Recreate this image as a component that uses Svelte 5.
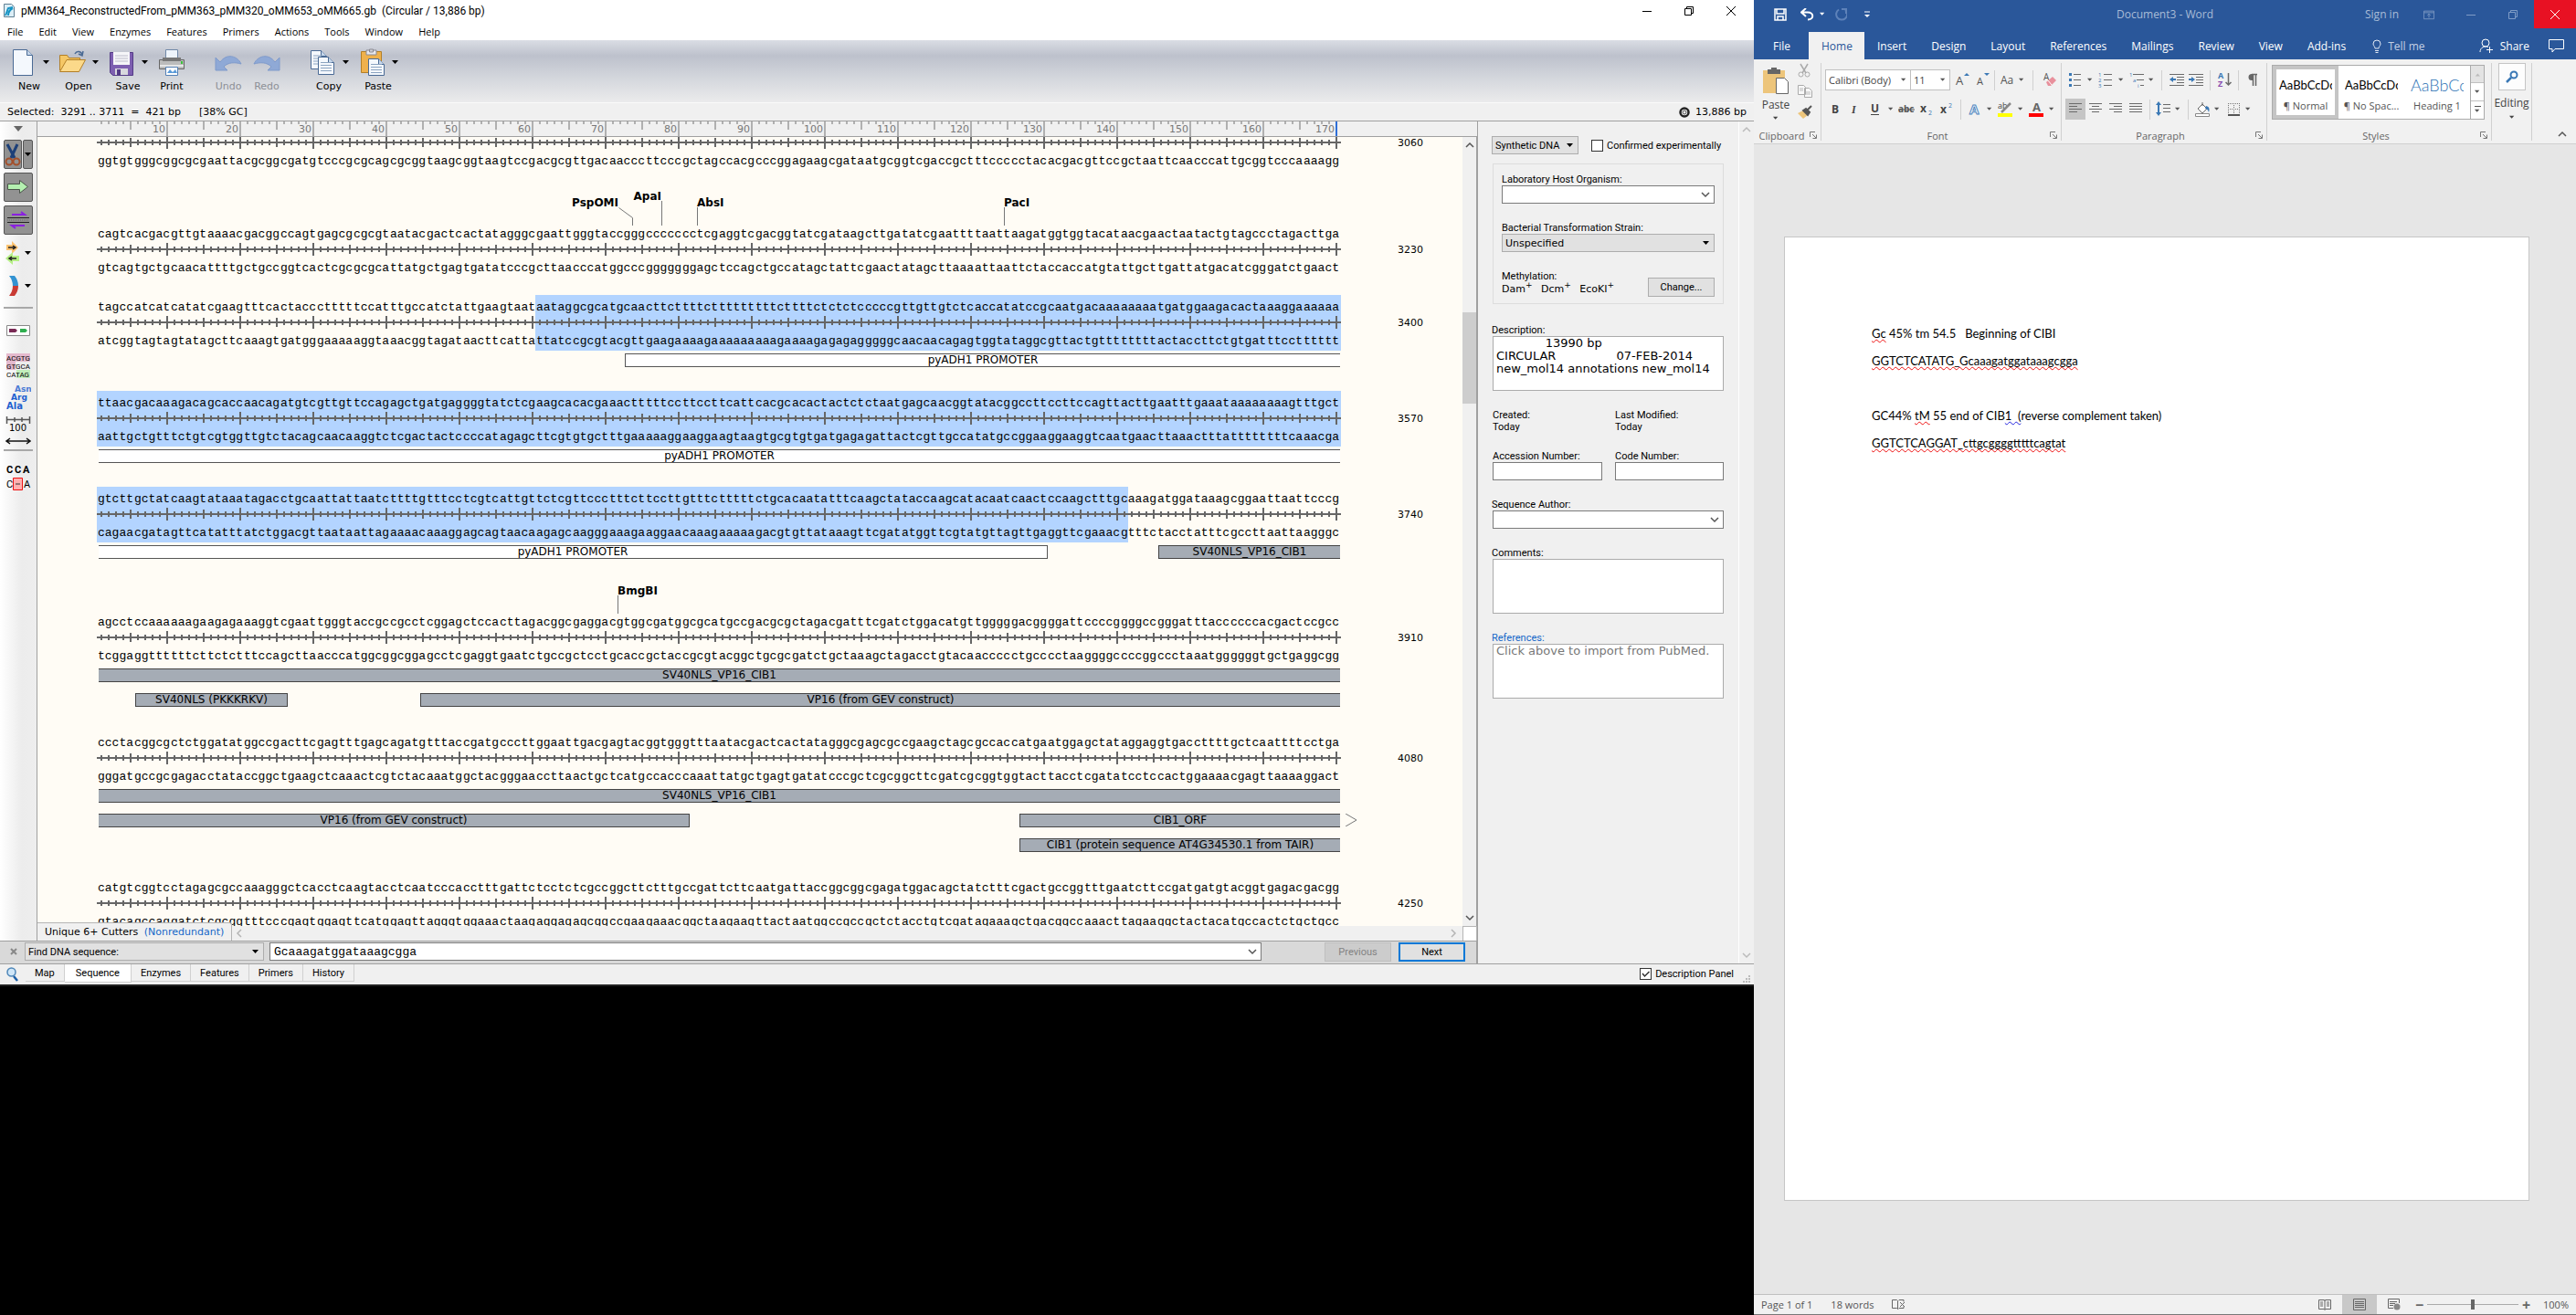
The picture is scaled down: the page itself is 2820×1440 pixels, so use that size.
<script>
  const ui = {
    menus: ['File', 'Edit', 'View', 'Enzymes', 'Features', 'Primers', 'Actions', 'Tools', 'Window', 'Help'],
    tabs: ['Map', 'Sequence', 'Enzymes', 'Features', 'Primers', 'History'],
    ribbonTabs: ['File', 'Home', 'Insert', 'Design', 'Layout', 'References', 'Mailings', 'Review', 'View', 'Add-ins'],
  };

  const description =
    ' '.repeat(13) + '13990 bp\nCIRCULAR' + ' '.repeat(16) + '07-FEB-2014\nnew_mol14 annotations new_mol14';

  const pair = { a: 't', t: 'a', g: 'c', c: 'g' };
  const complement = (s) => [...s].map((b) => pair[b]).join('');
  const fives = (s) => s.match(/.{5}/g);

  const rows = [
    {
      end: 3060,
      bottomOnly: true,
      bottom:
        'ggtgtgggcggcgcgaattacgcggcgatgtcccgcgcagcgcggtaagcggtaagtccgacgcgttgacaacccttccc' +
        'gctagccacgcccggagaagcgataatgcggtcgaccgctttccccctacacgacgttccgctaattcaacccattgcggtcccaaaagg',
    },
    {
      end: 3230,
      siteHeight: 37,
      sites: [
        { name: 'PspOMI', x: 571, y: 20, anchor: 'end', d: 'M571.5 21.5L586.5 32.5V41' },
        { name: 'ApaI', x: 618, y: 13, anchor: 'end', d: 'M618.5 14V41' },
        { name: 'AbsI', x: 657, y: 20, anchor: 'start', d: 'M657.5 21V41' },
        { name: 'PacI', x: 993, y: 20, anchor: 'start', d: 'M993.5 21V41' },
      ],
      top:
        'cagtcacgacgttgtaaaacgacggccagtgagcgcgcgtaatacgactcactatagggcgaattgggtaccgggccccc' +
        'cctcgaggtcgacggtatcgataagcttgatatcgaattttaattaagatggtggtacataacgaactaatactgtagccctagacttga',
    },
    {
      end: 3400,
      sel: [60, 170],
      lanes: [[{ from: 72, to: 170, name: 'pyADH1 PROMOTER', kind: 'plain openR' }]],
      top:
        'tagccatcatcatatcgaagtttcactaccctttttccatttgccatctattgaagtaataataggcgcatgcaacttct' +
        'tttctttttttttcttttctctctcccccgttgttgtctcaccatatccgcaatgacaaaaaaaatgatggaagacactaaaggaaaaaa',
    },
    {
      end: 3570,
      sel: [0, 170],
      lanes: [[{ from: 0, to: 170, name: 'pyADH1 PROMOTER', kind: 'plain openL openR' }]],
      top:
        'ttaacgacaaagacagcaccaacagatgtcgttgttccagagctgatgaggggtatctcgaagcacacgaaactttttcc' +
        'ttccttcattcacgcacactactctctaatgagcaacggtatacggccttccttccagttacttgaatttgaaataaaaaaaagtttgct',
    },
    {
      end: 3740,
      sel: [0, 141],
      lanes: [
        [
          { from: 0, to: 130, name: 'pyADH1 PROMOTER', kind: 'plain openL' },
          { from: 145, to: 170, name: 'SV40NLS_VP16_CIB1', kind: 'openR' },
        ],
      ],
      top:
        'gtcttgctatcaagtataaatagacctgcaattattaatcttttgtttcctcgtcattgttctcgttccctttcttcctt' +
        'gtttctttttctgcacaatatttcaagctataccaagcatacaatcaactccaagctttgcaaagatggataaagcggaattaattcccg',
    },
    {
      end: 3910,
      siteHeight: 30,
      sites: [{ name: 'BmgBI', x: 570, y: 13, anchor: 'start', d: 'M570.5 14V34' }],
      lanes: [
        [{ from: 0, to: 170, name: 'SV40NLS_VP16_CIB1', kind: 'openL openR' }],
        [
          { from: 5, to: 26, name: 'SV40NLS (PKKKRKV)', kind: '' },
          { from: 44, to: 170, name: 'VP16 (from GEV construct)', kind: 'openR' },
        ],
      ],
      top:
        'agcctccaaaaaagaagagaaaggtcgaattgggtaccgccgcctcggagctccacttagacggcgaggacgtggcgatg' +
        'gcgcatgccgacgcgctagacgatttcgatctggacatgttgggggacggggattccccggggccgggatttaccccccacgactccgcc',
    },
    {
      end: 4080,
      lanes: [
        [{ from: 0, to: 170, name: 'SV40NLS_VP16_CIB1', kind: 'openL openR' }],
        [
          { from: 0, to: 81, name: 'VP16 (from GEV construct)', kind: 'openL' },
          { from: 126, to: 170, name: 'CIB1_ORF', kind: 'openR', more: true },
        ],
        [{ from: 126, to: 170, name: 'CIB1 (protein sequence AT4G34530.1 from TAIR)', kind: 'openR' }],
      ],
      top:
        'ccctacggcgctctggatatggccgacttcgagtttgagcagatgtttaccgatgcccttggaattgacgagtacggtgg' +
        'gtttaatacgactcactatagggcgagcgccgaagctagcgccaccatgaatggagctataggaggtgaccttttgctcaattttcctga',
    },
    {
      end: 4250,
      top:
        'catgtcggtcctagagcgccaaagggctcacctcaagtacctcaatcccacctttgattctcctctcgccggcttctttg' +
        'ccgattcttcaatgattaccggcggcgagatggacagctatctttcgactgccggtttgaatcttccgatgatgtacggtgagacgacgg',
    },
  ];

  const indexes = Array.from({ length: 170 }, (_, i) => i + 1);
  const axisPath =
    'M0 7H1362' +
    indexes
      .map((i) => {
        const h = i % 10 === 0 ? 7 : i % 5 === 0 ? 5 : 3;
        return `M${i * 8 - 3} ${7 - h}v${h * 2}`;
      })
      .join('');
  const rulerPath = indexes.map((i) => `M${i * 8 - 3} 0v${i % 10 === 0 ? 16 : i % 5 === 0 ? 9 : 3}`).join('');
  const tens = Array.from({ length: 17 }, (_, i) => (i + 1) * 10);

  const page = (x, y, w, h) =>
    `<path d="M${x} ${y}h${w - 6}l6 6v${h - 6}h-${w}z" fill="#f4f8fd" stroke="#4a6a94"/><path d="M${x + w - 6} ${y}v6h6" fill="#c5d6ea" stroke="#4a6a94"/>`;
  const textLines = (x, y, w, n) =>
    `<path d="${Array.from({ length: n }, (_, k) => `M${x} ${y + k * 3}h${w}`).join('')}" stroke="#8ba3c0"/>`;

  const tools = [
    { name: 'New', drop: true, art: page(4.5, 1.5, 21, 28) },
    {
      name: 'Open', drop: true,
      art: '<path d="M1.500 24V7.500h8l2 3h12v4" fill="#f5c766" stroke="#b27f27"/><path d="M1.500 25.500L9 12.500h20.500l-7 13z" fill="#fbd98a" stroke="#b27f27"/><path d="M18 6c2-4 7-3 8 1m-4-1l4 2 1-5" fill="none" stroke="#4a6a94" stroke-width="1.500"/>',
    },
    {
      name: 'Save', drop: true,
      art: '<path d="M2.500 4.500h25v25h-22l-3-3z" fill="#7d5fb0" stroke="#533a86"/><path d="M6 4h18v14H6z" fill="#f5f5f8"/><path d="M8 8h14M8 11h14M8 14h14" stroke="#bcbcca"/><path d="M8 22h14v7H8z" fill="#d8d8de"/><path d="M10 23h4v6h-4z" fill="#533a86"/>',
    },
    {
      name: 'Print',
      art: '<path d="M8.500 1.500h13v12h-13z" fill="#eef4fb" stroke="#7189a8"/><path d="M1.500 12.500h27v10h-27z" fill="#bcbcbc" stroke="#666"/><path d="M5 10h20v4H5z" fill="#777"/><path d="M2 18h26v2H2z" fill="#e6e6e6"/><path d="M8.500 20.500h13v9h-13z" fill="#fff" stroke="#5580b5"/><path d="M10 27l3-4 3 3 3-3 2 4z" fill="#5a9ad8"/><path d="M25 14h2v3h-2z" fill="#3cc13c"/>',
    },
    { name: 'Undo', off: true, gap: true, art: '<path d="M1 10v14h13l-4-4c5-5 12-5 19-3-4-9-16-12-23-2z" fill="#8fa9d6" stroke="#7f9acb"/>' },
    { name: 'Redo', off: true, art: '<path d="M29 10v14H16l4-4c-5-5-12-5-19-3 4-9 16-12 23-2z" fill="#8fa9d6" stroke="#7f9acb"/>' },
    { name: 'Copy', drop: true, gap: true, art: page(2.5, 2.5, 17, 20) + textLines(5, 8, 9, 4) + page(10.5, 9.5, 17, 19) + textLines(13, 15.5, 12, 4) },
    {
      name: 'Paste', drop: true,
      art: '<path d="M3.500 3.500h22v23h-22z" fill="#efb14c" stroke="#b27f27"/><path d="M9 2h11v5H9z" fill="#e8e8ee" stroke="#8a8a92"/><path d="M12.500 1h4v3h-4z" fill="#d0d0d8" stroke="#8a8a92"/>' + page(11.5, 11.5, 17, 18) + textLines(14, 17.5, 12, 4),
    },
  ];

  const g = 'fill="none" stroke="#6a6a6a"';
  const lines = (d) => `<path d="${d}" ${g}/>`;
  const icons = {
    grow: '<text x="1" y="14" font-size="13" fill="#555">A</text><path d="M10 4l3-3 3 3z" fill="#3a78b5"/>',
    shrink: '<text x="2" y="14" font-size="11" fill="#555">A</text><path d="M10 1l3 3 3-3z" fill="#3a78b5"/>',
    caps: '<text x="0" y="13" font-size="12" fill="#555">Aa</text>',
    eraser: '<text x="1" y="9" font-size="10" fill="#555">A</text><path d="M4 11l7-6 4 4-6 6H6z" fill="#e8909c"/><path d="M6 9l4 5" stroke="#fff"/>',
    bold: '<text x="4" y="13" font-size="12" font-weight="700" fill="#444">B</text>',
    italic: '<text x="5" y="13" font-size="12" font-style="italic" font-weight="700" font-family="Liberation Serif" fill="#444">I</text>',
    under: '<text x="4" y="12" font-size="12" font-weight="700" fill="#444">U</text><path d="M4 14.500h9" stroke="#444"/>',
    strike: '<text x="-1" y="12" font-size="10" font-weight="700" fill="#555">abc</text><path d="M-1 9h18" stroke="#555"/>',
    sub: '<text x="1" y="12" font-size="12" font-weight="700" fill="#444">x</text><text x="10" y="15" font-size="7" fill="#3a78b5">2</text>',
    sup: '<text x="1" y="13" font-size="12" font-weight="700" fill="#444">x</text><text x="10" y="7" font-size="7" fill="#3a78b5">2</text>',
    glow: '<text x="3" y="14" font-size="15" font-weight="700" fill="#fff" stroke="#4d86c0">A</text>',
    mark: '<text x="0" y="8" font-size="9" fill="#444">ab</text><path d="M14 2L6 10l-2 2" stroke="#888" stroke-width="2.500"/><path d="M0 13h16v4H0z" fill="#ff0"/>',
    color: '<text x="4" y="11" font-size="13" font-weight="700" fill="#666">A</text><path d="M0 13h16v4H0z" fill="#f00"/>',
    bullets: lines('M6 2.500h8M6 8.500h8M6 14.500h8') + '<path d="M1 1h3v3H1zM1 7h3v3H1zM1 13h3v3H1z" fill="#3a78b5"/>',
    numbers: lines('M6 2.500h9M6 8.500h9M6 14.500h9') + '<text x="0" y="5" font-size="6" fill="#3a78b5">1</text><text x="0" y="11" font-size="6" fill="#3a78b5">2</text><text x="0" y="17" font-size="6" fill="#3a78b5">3</text>',
    levels: lines('M4 2.500h12M8 8.500h8M12 14.500h4') + '<text x="0" y="5" font-size="6" fill="#3a78b5">1</text><text x="4" y="11" font-size="6" fill="#3a78b5">a</text><text x="9" y="17" font-size="6" fill="#3a78b5">i</text>',
    outdent: lines('M0 2.500h16M8 5.500h8M8 8.500h8M8 11.500h8M0 14.500h16') + '<path d="M0 8l4-3v2h3v2H4v2z" fill="#3a78b5"/>',
    indent: lines('M0 2.500h16M8 5.500h8M8 8.500h8M8 11.500h8M0 14.500h16') + '<path d="M7 8L3 5v2H0v2h3v2z" fill="#3a78b5"/>',
    sort: '<text x="1" y="7" font-size="9" font-weight="700" fill="#3a78b5">A</text><text x="1" y="16" font-size="9" font-weight="700" fill="#8a4fb0">Z</text><path d="M12.500 1v13M9.500 11l3 3 3-3" fill="none" stroke="#6a6a6a" stroke-width="1.500"/>',
    pilcrow: '<path d="M13 2.500H7M8.500 3v12M11.500 3v12" fill="none" stroke="#666" stroke-width="1.500"/><path d="M7 2h2v7H7a3.500 3.500 0 0 1 0-7z" fill="#666"/>',
    left: lines('M1 2.500h14M1 5.500h9M1 8.500h14M1 11.500h9'),
    center: lines('M1 2.500h14M4 5.500h8M1 8.500h14M4 11.500h8'),
    right: lines('M1 2.500h14M6 5.500h9M1 8.500h14M6 11.500h9'),
    justify: lines('M1 2.500h14M1 5.500h14M1 8.500h14M1 11.500h14'),
    spacing: lines('M8 3.500h8M8 7.500h8M8 11.500h8') + '<path d="M3 0l3 4H4v8h2l-3 4-3-4h2V4H0z" fill="#3a78b5"/>',
    bucket: '<path d="M3 8l5-5 5 5-5 5z" fill="#fff" stroke="#6a6a6a"/><path d="M8 5V1" stroke="#6a6a6a"/><path d="M12 5c4 1 4 4 3 7-1-3-2-4-4-4z" fill="#3a78b5"/><path d="M.500 13.500h15v3H.500z" fill="#fff" stroke="#888"/>',
    borders: '<path d="M2.500 2v13M8.500 2v13M14.500 2v13M2 2.500h13M2 8.500h13" stroke="#777" stroke-dasharray="1 1"/><path d="M2 15h13" stroke="#555" stroke-width="2"/>',
  };

  const fontTop = [['grow', 25], ['shrink', 20], ['|', 6], ['caps', 23], ['v', 8], ['|', 16], ['eraser', 22]];
  const fontBottom = [['bold', 22], ['italic', 20], ['under', 24], ['v', 11], ['strike', 24], ['sub', 20], ['sup', 24], ['|', 6], ['glow', 24], ['v', 9], ['mark', 25], ['v', 9], ['color', 25], ['v', 10]];
  const paraTop = [['bullets', 22], ['v', 10], ['numbers', 24], ['v', 10], ['levels', 24], ['v', 8], ['|', 14], ['outdent', 20], ['indent', 22], ['|', 8], ['sort', 24], ['|', 6], ['pilcrow', 26]];
  const paraBottom = [['left', 22], ['center', 22], ['right', 22], ['justify', 22], ['|', 8], ['spacing', 22], ['v', 10], ['|', 12], ['bucket', 20], ['v', 12], ['borders', 23], ['v', 10]];
</script>

{#snippet caret()}
  <svg class="caret" viewBox="0 0 8 5" aria-hidden="true"><path d="M0 0h7L3.500 4z" fill="currentColor" /></svg>
{/snippet}

{#snippet chevron(dir)}
  <svg class="chev {dir}" viewBox="0 0 10 10" aria-hidden="true"><path d="M1 3l4 4 4-4" fill="none" stroke="currentColor" stroke-width="1.500" /></svg>
{/snippet}

{#snippet strip(items)}
  {#each items as [name, w]}
    {#if name === '|'}
      <span class="vsep" style="width:{w}px"></span>
    {:else}
      <button class="rib" class:on={name === 'left'} style="width:{w}px" aria-label={name === 'v' ? 'More options' : name}>
        {#if name === 'v'}{@render caret()}{:else}<svg viewBox="0 0 16 17" width="16" height="17">{@html icons[name]}</svg>{/if}
      </button>
    {/if}
  {/each}
{/snippet}

{#snippet groupName(text)}
  <div class="gname">
    <span>{text}</span>
    <svg viewBox="0 0 8 8" width="8" height="8"><path d="M.500 6V.500H6M3 3l4 4M7.500 3.500v4h-4" fill="none" stroke="#777" /></svg>
  </div>
{/snippet}

{#snippet strand(bases)}
  <div class="strand">{#each fives(bases) as five}<span>{five}</span>{/each}</div>
{/snippet}

<div class="desktop">
  <section class="gene">
    <header class="title">
      <svg viewBox="0 0 14 17" width="14" height="17">
        <path d="M1.500 1.500h8l3 3v11h-11z" fill="#dceef6" stroke="#5f7f92" />
        <path d="M3 14L6 6l5-1M6 14c0-4 1-6 5-8" fill="none" stroke="#1593c4" stroke-width="2" />
      </svg>
      <h1>pMM364_ReconstructedFrom_pMM363_pMM320_oMM653_oMM665.gb&nbsp; (Circular / 13,886 bp)</h1>
      <div class="winbtns">
        <button aria-label="Minimize"><svg viewBox="0 0 12 12"><path d="M1 6.500h10" /></svg></button>
        <button aria-label="Restore"><svg viewBox="0 0 12 12"><path d="M1.500 3.500h7v7h-7zM3.500 3V1.500h7v7H9" /></svg></button>
        <button aria-label="Close"><svg viewBox="0 0 12 12"><path d="M1 1l10 10M11 1L1 11" /></svg></button>
      </div>
    </header>

    <nav class="menu">
      {#each ui.menus as m}<button>{m}</button>{/each}
    </nav>

    <div class="toolbar">
      {#each tools as t}
        <button class="tool" class:wide={t.drop} class:gap={t.gap} disabled={t.off}>
          <span class="art">
            <svg viewBox="0 0 30 30" width="30" height="30">{@html t.art}</svg>
            {#if t.drop}{@render caret()}{/if}
          </span>
          <span>{t.name}</span>
        </button>
      {/each}
    </div>

    <div class="info">
      <span class="sel">Selected:&nbsp; 3291 .. 3711&nbsp; =&nbsp; 421 bp</span>
      <span>[38% GC]</span>
      <span class="size">
        <svg viewBox="0 0 12 12" width="12" height="12"><circle cx="6" cy="6" r="4.500" fill="none" stroke="#222" stroke-width="2.500" /><circle cx="6" cy="6" r="2" fill="#eee" stroke="#555" /></svg>
        13,886 bp
      </span>
    </div>

    <div class="work">
      <aside class="side">
        <button class="head" aria-label="Tools menu"><svg viewBox="0 0 10 6" width="10" height="6"><path d="M0 0h10L5 6z" fill="#666" /></svg></button>
        <div class="duo">
          <button class="pressed" aria-label="Show enzymes">
            <svg viewBox="0 0 18 30" width="18" height="30">
              <path d="M3 4l8 15M14 4L7 19" stroke="#1c3f78" stroke-width="3" />
              <circle cx="5" cy="23" r="3.500" fill="none" stroke="#a3502c" stroke-width="2" />
              <circle cx="13" cy="23" r="3.500" fill="none" stroke="#a3502c" stroke-width="2" />
            </svg>
          </button>
          <button class="pressed" aria-label="Enzyme options">{@render caret()}</button>
        </div>
        <button class="pressed" aria-label="Show features"><svg viewBox="0 0 26 18" width="26" height="18"><path d="M1.500 5.500h13v-4l9 7-9 7v-4h-13z" fill="#b4f0b0" stroke="#4a544a" /></svg></button>
        <button class="pressed" aria-label="Show primers">
          <svg viewBox="0 0 26 22" width="26" height="22">
            <path d="M6 5h14l-4-3M20 17H6l4 3" fill="none" stroke="#8a1fe0" stroke-width="2" />
            <path d="M1 8.500h24M1 13.500h24" stroke="#222" /><path d="M1 11h24" stroke="#666" stroke-dasharray="1 1" />
          </svg>
        </button>
        <div class="duo flat">
          <button aria-label="Show ORFs">
            <svg viewBox="0 0 18 26" width="18" height="26">
              <path d="M2 4h6V0l7 7-7 7v-4H2z" fill="#fcc271" /><path d="M4 7h8M9 5l3 2-3 2" fill="none" stroke="#222" stroke-width="1.500" />
              <path d="M16 16h-7v-4l-8 7 8 7v-4h7z" fill="#b6ef86" /><path d="M13 19H5M8 17l-3 2 3 2" fill="none" stroke="#222" stroke-width="1.500" />
            </svg>
          </button>
          <button aria-label="ORF options">{@render caret()}</button>
        </div>
        <div class="duo flat">
          <button aria-label="Show translation">
            <svg viewBox="0 0 18 24" width="18" height="24"><path d="M5 1h6q4 5 4 11h-6q0-6-4-11z" fill="#3393d2" /><path d="M15 12h-6q0 6-4 11h6q4-5 4-11z" fill="#c93b34" /></svg>
          </button>
          <button aria-label="Translation options">{@render caret()}</button>
        </div>
        <hr />
        <button class="h34" aria-label="Alignment"><svg viewBox="0 0 26 12" width="26" height="12"><path d="M.500.500h25v11H.500z" fill="#fff" stroke="#888" /><path d="M3 4h7l2 2-2 2H3z" fill="#7a2a55" /><path d="M15 4h6l2 2-2 2h-6z" fill="#2fae4f" /></svg></button>
        <button class="h34" aria-label="Sequence colors">
          <svg viewBox="0 0 28 28" width="28" height="28">
            <path d="M1 1h26v9H1zM1 10h10v9H1z" fill="#e4b9cd" /><path d="M12 19h15v9H12z" fill="#c2efbb" />
            <text x="1" y="9" font-size="8">ACGTG</text><text x="1" y="18" font-size="8">GTGCA</text><text x="1" y="27" font-size="8">CATAG</text>
          </svg>
        </button>
        <button class="h28" aria-label="Amino acids">
          <svg viewBox="0 0 28 28" width="28" height="28" font-weight="700" fill="#1f5fd0">
            <text x="10" y="8" font-size="9" opacity=".8">Asn</text><text x="6" y="17" font-size="9">Arg</text><text x="1" y="27" font-size="10">Ala</text>
          </svg>
        </button>
        <button class="h22" aria-label="Numbering"><svg viewBox="0 0 28 18" width="28" height="18"><path d="M1 4.500h26M1.500 1v8M26.500 1v8M10 2v5M18 2v5" stroke="#555" stroke-width="1.500" /><text x="4" y="17" font-size="10">100</text></svg></button>
        <button class="h6" aria-label="Expand"><svg viewBox="0 0 28 8" width="28" height="8"><path d="M2 4h24M5 1L1 4l4 3M23 1l4 3-4 3" fill="none" stroke="#111" stroke-width="1.500" /></svg></button>
        <hr class="last" />
        <button class="h34" aria-label="Alignment mismatches">
          <svg viewBox="0 0 28 32" width="28" height="32">
            <g font-size="11" font-weight="700"><text x="1" y="11">C</text><text x="10" y="11">C</text><text x="19" y="11">A</text></g>
            <path d="M8.500 16.500h10v13h-10z" fill="#ffb0b0" stroke="#e11" /><path d="M11 23h5" stroke="#333" />
            <text x="1" y="27" font-size="11">C</text><text x="20" y="27" font-size="11">A</text>
          </svg>
        </button>
      </aside>

      <div class="center">
        <div class="ruler">
          <svg viewBox="0 0 1362 16" width="1362" height="16"><path d={rulerPath} stroke="#b0b0b0" stroke-width="2" /><path d="M1357 0v16" stroke="#2e6fd8" stroke-width="2" /></svg>
          <div class="tens">{#each tens as n}<span>{n}</span>{/each}</div>
        </div>
        <div class="scroller">
          <div class="canvas">
            {#each rows as row}
              <div class="row">
                {#if row.sites}
                  <svg class="sites" viewBox="0 0 1362 {row.siteHeight}" width="1362" height={row.siteHeight}>
                    {#each row.sites as s}
                      <path d={s.d} fill="none" stroke="#777" />
                      <text x={s.x} y={s.y} text-anchor={s.anchor}>{s.name}</text>
                    {/each}
                  </svg>
                {/if}
                <div class="duplex" class:half={row.bottomOnly}>
                  {#if row.sel}
                    <div class="hl" style="margin-left:{row.sel[0] * 8}px;width:{(row.sel[1] - row.sel[0]) * 8 + (row.sel[1] === 170 ? 2 : 1)}px"></div>
                  {/if}
                  <div class="strands">
                    {#if !row.bottomOnly}{@render strand(row.top)}{/if}
                    <svg viewBox="0 0 1362 14" width="1362" height="14"><path d={axisPath} stroke="#666" stroke-width="2" /></svg>
                    {@render strand(row.bottom ?? complement(row.top))}
                  </div>
                  <span class="pos">{row.end}</span>
                </div>
                {#if row.lanes}
                  <div class="lanes">
                    {#each row.lanes as lane}
                      <div class="lane">
                        {#each lane as f}
                          <div class="feat {f.kind}" style="grid-column:{f.from + 1} / {f.to + 1}">{f.name}</div>
                          {#if f.more}<svg class="more" viewBox="0 0 14 14" width="14" height="14"><path d="M1 0l12 7-12 7" fill="none" stroke="#777" /></svg>{/if}
                        {/each}
                      </div>
                    {/each}
                  </div>
                {/if}
              </div>
            {/each}
          </div>
          <div class="vbar">{@render chevron('up')}<i class="before"></i><i class="thumb"></i><i class="after"></i>{@render chevron('down')}</div>
        </div>
        <div class="under">
          <div class="cutters">Unique 6+ Cutters <a href="#nonredundant">(Nonredundant)</a></div>
          <div class="hbar">{@render chevron('left')}{@render chevron('right')}</div>
          <div class="corner"></div>
        </div>
        <form class="find">
          <button type="button" class="x" aria-label="Close find bar"><svg viewBox="0 0 8 8" width="8" height="8"><path d="M1 1l6 6M7 1L1 7" stroke="#888" stroke-width="2" /></svg></button>
          <label class="combo kind"><select aria-label="Find mode"><option>Find DNA sequence:</option></select>{@render caret()}</label>
          <label class="combo query"><input aria-label="Find text" value="Gcaaagatggataaagcgga" />{@render chevron('down')}</label>
          <button type="button" class="prev" disabled>Previous</button>
          <button type="button" class="next">Next</button>
        </form>
      </div>

      <aside class="panel">
        <div class="fields">
          <div class="first">
            <label class="combo kind"><select aria-label="DNA kind"><option>Synthetic DNA</option></select>{@render caret()}</label>
            <label class="check"><input type="checkbox" />Confirmed experimentally</label>
          </div>
          <div class="box">
            <label for="host">Laboratory Host Organism:</label>
            <div class="combo white"><input id="host" />{@render chevron('down')}</div>
            <label class="mt" for="strain">Bacterial Transformation Strain:</label>
            <div class="combo kind big"><select id="strain"><option>Unspecified</option></select>{@render caret()}</div>
            <div class="meth">
              <div><p>Methylation:</p><p class="marks">Dam<sup>+</sup> <span>Dcm<sup>+</sup></span> <span>EcoKI<sup>+</sup></span></p></div>
              <button>Change...</button>
            </div>
          </div>
          <label class="desc" for="desc">Description:</label>
          <textarea id="desc" value={description}></textarea>
          <div class="cols dates"><p>Created:<br />Today</p><p>Last Modified:<br />Today</p></div>
          <div class="cols">
            <div><label for="acc">Accession Number:</label><input id="acc" /></div>
            <div><label for="code">Code Number:</label><input id="code" /></div>
          </div>
          <label class="mt" for="author">Sequence Author:</label>
          <div class="combo white"><input id="author" />{@render chevron('down')}</div>
          <label class="mt" for="comments">Comments:</label>
          <textarea id="comments"></textarea>
          <label class="mt link" for="refs">References:</label>
          <textarea id="refs" placeholder="Click above to import from PubMed."></textarea>
        </div>
        <div class="vbar dim">{@render chevron('up')}{@render chevron('down')}</div>
      </aside>
    </div>

    <footer class="views">
      <button class="mag" aria-label="Search"><svg viewBox="0 0 16 16" width="16" height="16"><path d="M9 10l4 5" stroke="#1b5fa8" stroke-width="2.500" /><circle cx="6.500" cy="5.500" r="4.500" fill="#cfe6f8" stroke="#4d86b8" stroke-width="1.500" /></svg></button>
      {#each ui.tabs as t}<button class="view" class:active={t === 'Sequence'}>{t}</button>{/each}
      <label class="check"><span class="tick"><input type="checkbox" checked /><svg viewBox="0 0 13 13" width="13" height="13"><path d="M3 6l2.500 3L10.500 4" fill="none" stroke="#333" stroke-width="1.500" /></svg></span>Description Panel</label>
      <svg class="grip" viewBox="0 0 9 9" width="9" height="9"><path d="M6 0h2v2H6zM3 3h2v2H3zM6 3h2v2H6zM0 6h2v2H0zM3 6h2v2H3zM6 6h2v2H6z" fill="#bbb" /></svg>
    </footer>
  </section>

  <section class="word">
    <header class="wtitle">
      <div class="quick">
        <button aria-label="Save"><svg viewBox="0 0 14 14" width="14" height="14"><path d="M1 1h12v12H1zM3 1v5h8V1M4 13V9h6v4" fill="none" stroke="#fff" stroke-width="1.500" /></svg></button>
        <button aria-label="Undo"><svg viewBox="0 0 15 14" width="15" height="14"><path d="M6 0L1 4.500 6 9M1 4.500h7c7 0 7 8 0 8" fill="none" stroke="#fff" stroke-width="2" /></svg></button>
        {@render caret()}
        <button class="redo" aria-label="Redo"><svg viewBox="0 0 14 14" width="14" height="14"><path d="M8 1h5v5M12 2a6 6 0 1 1-7-.500" fill="none" stroke="#5e82b9" stroke-width="2" /></svg></button>
        <button class="custom" aria-label="Customize toolbar"><svg viewBox="0 0 6 8" width="6" height="8"><path d="M0 1h6" stroke="#fff" /><path d="M0 4h6L3 7z" fill="#fff" /></svg></button>
      </div>
      <h2>Document3 - Word</h2>
      <div class="wright">
        <span>Sign in</span>
        <button aria-label="Ribbon display options"><svg viewBox="0 0 14 12"><path d="M.500 1.500h13v10H.500zM.500 3.500h13M7 10V5M5 7l2-2 2 2" /></svg></button>
        <button aria-label="Minimize"><svg viewBox="0 0 12 12"><path d="M1 6.500h10" /></svg></button>
        <button aria-label="Restore"><svg viewBox="0 0 12 12"><path d="M1.500 3.500h7v7h-7zM3.500 3V1.500h7v7H9" /></svg></button>
        <button class="close" aria-label="Close"><svg viewBox="0 0 12 12"><path d="M1 1l10 10M11 1L1 11" /></svg></button>
      </div>
    </header>
    <nav class="wtabs">
      {#each ui.ribbonTabs as t}<button class:home={t === 'Home'}>{t}</button>{/each}
      <button class="tell"><svg viewBox="0 0 10 15" width="10" height="15"><path d="M3 10c0-2-2-3-2-5a4 4 0 0 1 8 0c0 2-2 3-2 5zM3 12.500h4M3.500 14.500h3" fill="none" stroke="#e3eaf5" /></svg>Tell me</button>
      <button class="share"><svg viewBox="0 0 16 16" width="16" height="16"><circle cx="7" cy="5" r="4" fill="none" stroke="#fff" /><path d="M1 15c0-4 3-6 6-6 1 0 2 0 3 1M8 12.500h7M11.500 9v7" fill="none" stroke="#fff" /></svg>Share</button>
      <button class="comment" aria-label="Comments"><svg viewBox="0 0 17 15" width="17" height="15"><path d="M.500.500h16v10H7l-3 3.500v-3.500H.500z" fill="none" stroke="#fff" /></svg></button>
    </nav>

    <div class="ribbon">
      <div class="group clip">
        <div class="gbody">
          <button class="paste">
            <svg viewBox="0 0 30 32" width="30" height="32"><path d="M1 4h24v25H1z" fill="#edc57b" /><path d="M6 3h4V1h6v2h4v5H6z" fill="#666" /><path d="M15.500 12.500h9l4 4v13h-13z" fill="#fff" stroke="#666" /></svg>
            <span>Paste</span>{@render caret()}
          </button>
          <div class="mini">
            <button aria-label="Cut"><svg viewBox="0 0 14 16" width="14" height="16"><path d="M3 1l6 10M11 1L5 11" stroke="#aaa" stroke-width="1.500" /><circle cx="3.500" cy="12.500" r="2.500" fill="none" stroke="#aaa" /><circle cx="10.500" cy="12.500" r="2.500" fill="none" stroke="#aaa" /></svg></button>
            <button aria-label="Copy"><svg viewBox="0 0 16 14" width="16" height="14"><path d="M.500.500h6l2 2v8h-8zM7.500 3.500h5l3 3v7h-8z" fill="#f8f8f8" stroke="#aaa" /><path d="M2 4h4M2 6h4M9 8h5M9 10h5" stroke="#bbb" /></svg></button>
            <button aria-label="Format painter"><svg viewBox="0 0 16 16" width="16" height="16"><path d="M0 9l6-3 5 5-5 4z" fill="#edc57b" /><path d="M6 6l3-2 4 4-2 3zM11 5l4-4" fill="#555" stroke="#555" stroke-width="2" /></svg></button>
          </div>
        </div>
        {@render groupName('Clipboard')}
      </div>
      <div class="group font">
        <div class="gbody two">
          <div class="line"><label class="combo fname"><input aria-label="Font" value="Calibri (Body)" />{@render caret()}</label><label class="combo fsize"><input aria-label="Font size" value="11" />{@render caret()}</label>{@render strip(fontTop)}</div>
          <div class="line">{@render strip(fontBottom)}</div>
        </div>
        {@render groupName('Font')}
      </div>
      <div class="group para">
        <div class="gbody two">
          <div class="line">{@render strip(paraTop)}</div>
          <div class="line">{@render strip(paraBottom)}</div>
        </div>
        {@render groupName('Paragraph')}
      </div>
      <div class="group styles">
        <div class="gbody">
          <div class="gallery">
            <button class="style on"><b>AaBbCcDc</b><span>¶ Normal</span></button>
            <button class="style"><b>AaBbCcDc</b><span>¶ No Spac...</span></button>
            <button class="style"><b class="h">AaBbCc</b><span>Heading 1</span></button>
            <div class="steps"><button class="flip" aria-label="Scroll up" disabled>{@render caret()}</button><button aria-label="Scroll down">{@render caret()}</button><button class="all" aria-label="More styles">{@render caret()}</button></div>
          </div>
        </div>
        {@render groupName('Styles')}
      </div>
      <div class="group edit">
        <button class="editing">
          <span class="lens"><svg viewBox="0 0 14 14" width="14" height="14"><circle cx="9" cy="5" r="3.500" fill="none" stroke="#3a78b5" stroke-width="2" /><path d="M6 8l-5 5" stroke="#3a78b5" stroke-width="2.500" /></svg></span>
          Editing {@render caret()}
        </button>
      </div>
      <div class="fold">{@render chevron('up')}</div>
    </div>

    <main class="paper-area">
      <article class="paper">
        <p><u>Gc</u> 45% tm 54.5&nbsp;&nbsp; Beginning of CIBI</p>
        <p><u>GGTCTCATATG_Gcaaagatggataaagcgga</u></p>
        <p>&nbsp;</p>
        <p>GC44% <u>tM</u> 55 end of CIB<u class="blue">1&nbsp; (</u>reverse complement taken)</p>
        <p><u>GGTCTCAGGAT_cttgcggggtttttcagtat</u></p>
      </article>
    </main>

    <footer class="wstatus">
      <span>Page 1 of 1</span><span>18 words</span>
      <svg viewBox="0 0 15 13" width="15" height="13"><path d="M.500 1.500h5l1 1v9l-1-1h-5zM7 2.500l1-1h5v2M7 11.500l1-1h5v-2M9 4l5 5M14 4L9 9" fill="none" stroke="#666" /></svg>
      <div class="zoom">
        <button aria-label="Read mode"><svg viewBox="0 0 14 13" width="14" height="13"><path d="M.500 1.500h6l.500 1 .500-1h6v10h-6l-.500 1-.500-1h-6zM7 2v10M2 4h3M2 6h3M2 8h3M9 4h3M9 6h3M9 8h3" fill="none" stroke="#666" /></svg></button>
        <button class="on" aria-label="Print layout"><svg viewBox="0 0 14 13" width="14" height="13"><path d="M.500.500h13v12H.500zM2 3.500h10M2 5.500h10M2 7.500h10M2 9.500h10" fill="none" stroke="#666" /></svg></button>
        <button aria-label="Web layout"><svg viewBox="0 0 14 13" width="14" height="13"><path d="M12.500 5V.500H.500v10H6M2 3.500h8M2 5.500h6M2 7.500h4" fill="none" stroke="#666" /><circle cx="10" cy="9" r="3.500" fill="#888" /></svg></button>
        <b>−</b><input type="range" aria-label="Zoom" /><b>+</b><span class="pct">100%</span>
      </div>
    </footer>
  </section>
</div>

<style>
  :global(body) { margin: 0; background: #000; }
  * { box-sizing: border-box; }
  h1, h2, p { margin: 0; font-weight: 400; }
  button, input, select, textarea { font: inherit; color: inherit; margin: 0; padding: 0; border: 0; background: none; border-radius: 0; }
  input, select { appearance: none; min-width: 0; width: 100%; outline: 0; }
  svg { display: block; flex: none; }
  .caret { width: 8px; height: 5px; }
  .chev { width: 10px; height: 10px; color: #555; }
  .chev.up { transform: rotate(180deg); }
  .chev.left { transform: rotate(90deg); }
  .chev.right { transform: rotate(-90deg); }

  .desktop { display: grid; grid-template-columns: 32fr 15fr; min-height: 100vh; background: #000; align-items: start; }

  .gene { height: 75vh; display: flex; flex-direction: column; background: #f0f0f0; border-bottom: 2px solid #222; font: 11px 'DejaVu Sans', sans-serif; color: #000; min-width: 0; overflow: hidden; }
  .title { display: flex; align-items: center; height: 24px; padding: 0 2px 1px 3px; gap: 6px; background: #fff; }
  .title h1 { font: 12px Roboto, sans-serif; }
  .winbtns { margin-left: auto; display: flex; }
  .winbtns button, .wright button { width: 46px; height: 20px; display: grid; place-items: center; }
  .winbtns svg { width: 12px; height: 12px; fill: none; stroke: #000; }
  .menu { display: flex; height: 20px; padding-left: 8px; gap: 17px; background: #fff; font: 11px 'Open Sans', sans-serif; }
  .toolbar { display: flex; height: 69px; padding: 9px 5px 0; background: linear-gradient(#dadde4, #bdc1cc 25%, #d3d6dc 60%, #ebebec); border-bottom: 1px solid #fafafa; }
  .tool { width: 42px; height: 48px; display: flex; flex-direction: column; align-items: center; justify-content: space-between; color: #000; }
  .tool.wide { width: 54px; }
  .tool.gap { margin-left: 20px; }
  .tool:disabled { color: #8c8f96; }
  .art { display: flex; align-items: center; gap: 7px; }
  .info { display: flex; align-items: center; height: 20px; padding: 0 8px; gap: 20px; border-bottom: 1px solid #a0a0a0; font-size: 11px; }
  .size { margin-left: auto; display: flex; gap: 6px; align-items: center; }

  .work { flex: 1; display: flex; min-height: 0; }
  .side { width: 41px; padding: 0 4px; background: linear-gradient(90deg, #fff, #ececec 60%, #eee); border-right: 1px solid #a0a0a0; display: flex; flex-direction: column; gap: 4px; font-family: 'DejaVu Sans', sans-serif; }
  .side button { height: 32px; display: grid; place-items: center; flex: none; }
  .side .head { height: 16px; }
  .side .h34 { height: 34px; font-family: Roboto, sans-serif; }
  .side .h28 { height: 28px; }
  .side .h22 { height: 22px; }
  .side .h6 { height: 6px; }
  .side .pressed { border: 1px solid #555; border-radius: 2px; background: #929292; }
  .duo { display: grid; grid-template-columns: 20px 11px; gap: 1px; }
  .side hr { width: 100%; margin: 3px 0; border: 0; border-top: 2px solid #a8a8a8; }
  .side .last { margin-bottom: 8px; }

  .center { flex: 1; min-width: 0; display: flex; flex-direction: column; }
  .ruler { height: 17px; padding-left: 65px; display: grid; background: #f0f0f0; border-bottom: 1px solid #a0a0a0; }
  .ruler > * { grid-area: 1 / 1; }
  .tens { display: flex; color: #777; line-height: 18px; }
  .tens span { width: 80px; padding-right: 5px; text-align: right; }
  .scroller { flex: 1; display: flex; min-height: 0; background: #fffcf5; }
  .canvas { flex: 1; min-width: 0; overflow: hidden; padding-left: 65px; }
  .row { margin-bottom: 20px; }
  .row:first-child { margin-top: -1px; }
  .sites { overflow: visible; font-weight: 700; font-size: 12px; }
  .duplex { display: grid; grid-template-columns: 1362px auto; height: 60px; }
  .duplex.half { height: 37px; }
  .hl, .strands { grid-area: 1 / 1; }
  .hl { background: #b3d4ff; }
  .strands { display: grid; grid-template-rows: 23px 14px 23px; }
  .half .strands { grid-template-rows: 14px 23px; }
  .strand { display: flex; padding: 4px 0 0 1px; font: 13px/19px 'Liberation Mono', monospace; white-space: nowrap; }
  .strand span { width: 40px; }
  .pos { grid-area: 1 / 2; margin-left: 62px; line-height: 61px; }
  .half .pos { line-height: 16px; }
  .lanes { display: grid; gap: 13px; padding: 4px 0 7px 1px; }
  .lane { display: grid; grid-template-columns: repeat(170, 8px) auto; height: 14px; }
  .feat { margin-left: 1px; border: 1px solid #444; background: #a5acb5; text-align: center; font-size: 12px; line-height: 13px; white-space: nowrap; }
  .feat.plain { background: #fff; border-color: #555; }
  .feat.openL { border-left: 0; }
  .feat.openR { border-right: 0; }
  .more { grid-column: 171; margin-left: 5px; }

  .vbar { width: 16px; background: #f0f0f0; border-right: 1px solid #a0a0a0; display: flex; flex-direction: column; align-items: center; justify-content: space-between; padding: 4px 0; }
  .vbar .before { flex: 178 0 0; }
  .vbar .thumb { flex: 99 0 0; width: 100%; background: #cdcdcd; }
  .vbar .after { flex: 557 0 0; }
  .dim { border-right: 0; border-left: 1px solid #fff; width: 17px; }
  .dim .chev { color: #bbb; }
  .under { display: flex; height: 16px; align-items: flex-end; }
  .cutters { height: 20px; padding: 0 8px; line-height: 20px; font-size: 11px; background: #f0f0f0; border: 1px solid #b5b5b5; border-left: 0; border-bottom: 0; border-radius: 0 3px 0 0; white-space: nowrap; }
  .cutters a { margin-left: 3px; color: #1467c8; text-decoration: none; }
  .hbar { flex: 1; height: 16px; display: flex; align-items: center; justify-content: space-between; padding: 0 5px 0 3px; }
  .hbar .chev { color: #b5b5b5; }
  .corner { width: 16px; height: 16px; background: #fff; border: 1px solid #b5b5b5; border-bottom: 0; }

  .find { display: flex; align-items: center; height: 25px; padding: 0 12px 2px 0; margin-left: -41px; position: relative; background: #d9d9d9; border-top: 1px solid #a0a0a0; border-right: 1px solid #a0a0a0; font: 11px Roboto, sans-serif; }
  .find .x { width: 27px; padding-left: 11px; }
  .combo { display: grid; align-items: center; height: 20px; background: #fff; border: 1px solid #7a7a7a; }
  .combo > :global(*) { grid-area: 1 / 1; }
  .combo .caret, .combo .chev { justify-self: end; margin-right: 4px; pointer-events: none; }
  .combo.kind { background: #e1e1e1; border-color: #adadad; }
  .combo select { padding-left: 3px; }
  .find .kind { width: 262px; margin-right: 6px; }
  .find .query { flex: 1; font: 13px 'Liberation Mono', monospace; }
  .query input { padding-left: 4px; }
  .find .prev, .find .next { width: 73px; height: 21px; margin-left: 8px; }
  .find .prev { margin-left: 69px; background: #ccc; border: 1px solid #bfbfbf; color: #838383; }
  .find .next { background: #e1e1e1; border: 2px solid #0078d7; }

  .panel { width: 303px; display: flex; border-left: 1px solid #a0a0a0; font: 11px Roboto, sans-serif; }
  .fields { flex: 1; padding: 16px 16px 0 15px; display: flex; flex-direction: column; line-height: 13px; }
  .first { display: flex; align-items: center; gap: 14px; }
  .first .kind { width: 95px; }
  .check { display: flex; align-items: center; gap: 4px; white-space: nowrap; }
  .check input { flex: none; width: 13px; height: 13px; background: #fff; border: 1px solid #333; }
  .tick { display: grid; }
  .tick > * { grid-area: 1 / 1; }
  .tick svg { pointer-events: none; }
  .box { margin: 10px 0 22px 1px; height: 154px; padding: 10px 9px; border: 1px solid #dcdcdc; }
  .box label, .fields > label { display: block; }
  .fields > .mt, .box .mt { margin-top: 20px; height: 13px; }
  .big, .marks { font-family: 'DejaVu Sans', sans-serif; }
  .meth { margin-top: 20px; display: flex; justify-content: space-between; align-items: flex-end; }
  .marks { line-height: 16px; }
  .marks span { margin-left: 6px; }
  sup { font-size: 9px; line-height: 0; }
  .meth button { width: 73px; height: 21px; background: #e1e1e1; border: 1px solid #adadad; }
  textarea { display: block; height: 60px; width: 100%; padding: 0 3px; resize: none; background: #fff; border: 1px solid #ababab; font: 13px/14px 'DejaVu Sans', sans-serif; }
  textarea::placeholder { color: #777; opacity: 1; }
  .fields > textarea, .fields > .white, .cols { margin-left: 1px; width: auto; }
  .cols { display: grid; grid-template-columns: 120px 119px; column-gap: 14px; }
  .cols input { height: 20px; background: #fff; border: 1px solid #7a7a7a; }
  .dates { margin-top: 20px; margin-bottom: 19px; }
  .link { color: #1467c8; }

  .views { display: flex; height: 23px; border-top: 1px solid #a0a0a0; font: 11px Roboto, sans-serif; }
  .mag { width: 28px; display: grid; place-items: center; }
  .view { padding: 0 10px; border-right: 1px solid #d0d0d0; border-bottom: 1px solid #d0d0d0; margin-bottom: 3px; }
  .view.active { background: #fff; margin-bottom: 2px; padding: 0 12px; }
  .views .check { margin-left: auto; padding-bottom: 2px; }
  .grip { align-self: flex-end; margin: 0 3px 1px 10px; }

  .word { height: 100vh; display: flex; flex-direction: column; background: #e6e6e6; border-bottom: 1px solid #777; font: 12px 'Open Sans', sans-serif; min-width: 0; overflow: hidden; }
  .wtitle { height: 31px; display: grid; grid-template-columns: 1fr auto 1fr; align-items: center; background: #2a579a; color: #a9bcd7; }
  .wtitle h2 { font-size: 12px; }
  .quick { display: flex; align-items: center; padding-left: 22px; color: #fff; }
  .quick > button + button { margin-left: 15px; }
  .quick .caret { width: 6px; margin-left: 6px; }
  .quick .redo { margin-left: 10px; }
  .quick .custom { margin-left: 19px; }
  .wright { display: flex; justify-content: flex-end; align-items: center; }
  .wright span { margin-right: 10px; }
  .wright button { height: 31px; }
  .wright svg { width: 12px; height: 12px; fill: none; stroke: #7f9cc6; }
  .wright .close { background: #e81123; }
  .wright .close svg { stroke: #fff; }
  .wtabs { display: flex; height: 34px; padding-top: 4px; background: #2a579a; color: #fff; }
  .wtabs button { padding: 0 13px 0 14px; display: flex; align-items: center; gap: 7px; }
  .wtabs button:first-child { padding: 0 20px 0 21px; }
  .wtabs .home { background: #f1f1f1; color: #2a579a; }
  .wtabs .tell { color: #c3d0e4; margin-left: 2px; }
  .wtabs .share { margin-left: auto; padding-right: 7px; }

  .ribbon { display: flex; height: 93px; padding: 4px 0 3px; background: #f1f1f1; border-bottom: 1px solid #d0d0d0; color: #444; }
  .group { border-right: 1px solid #d0d0d0; display: flex; flex-direction: column; justify-content: space-between; }
  .gbody { display: flex; height: 62px; }
  .gname { display: flex; align-items: center; height: 12px; padding-right: 4px; color: #666; font-size: 11px; }
  .gname span { flex: 1; text-align: center; }
  .clip { width: 74px; }
  .font { width: 263px; padding-left: 4px; }
  .para { width: 225px; padding-left: 4px; }
  .styles { width: 246px; padding-left: 5px; }
  .edit { width: 44px; }
  .paste { width: 48px; display: flex; flex-direction: column; align-items: center; gap: 1px; padding-top: 4px; }
  .paste .caret { width: 6px; margin-top: 3px; }
  .mini { display: flex; flex-direction: column; justify-content: space-between; }
  .two { flex-direction: column; justify-content: space-between; padding-top: 7px; }
  .line { display: flex; align-items: center; height: 23px; }
  .rib { height: 23px; display: grid; place-items: center; }
  .rib .caret, .fname .caret, .fsize .caret { width: 6px; color: #555; }
  .rib svg { overflow: visible; }
  .rib.on { background: #c5c5c5; }
  .vsep { height: 22px; background: linear-gradient(#d0d0d0, #d0d0d0) center / 1px 100% no-repeat; }
  .fname, .fsize { height: 23px; border-color: #c0c0c0; font-size: 11px; }
  .fname { width: 94px; }
  .fsize { width: 43px; border-left: 0; }
  .fname input, .fsize input { padding-left: 3px; }
  .gallery { display: flex; height: 60px; margin-top: 2px; background: #fff; border: 1px solid #ababab; width: 233px; }
  .style { width: 72px; padding: 5px 3px 0; display: flex; flex-direction: column; align-items: center; gap: 3px; border: 4px solid #fff; }
  .style.on { border-color: #c5c5c5; }
  .style b { width: 100%; height: 24px; overflow: hidden; text-align: left; font: 13px/24px Lato, sans-serif; color: #000; }
  .style .h { font: 300 18px/24px Lato, sans-serif; color: #2e74b5; }
  .style span { white-space: nowrap; color: #555; font-size: 11px; }
  .steps { width: 15px; display: grid; grid-template-rows: 1fr 1fr 1fr; border-left: 1px solid #ababab; margin-left: auto; }
  .steps button { display: grid; place-items: center; border-bottom: 1px solid #c0c0c0; }
  .steps .caret { width: 6px; color: #555; }
  .steps .all { border-bottom: 0; align-content: center; gap: 2px; }
  .steps .all::before { content: ''; width: 7px; height: 1px; background: #555; }
  .steps .flip { background: #e3e3e3; }
  .steps .flip .caret { transform: rotate(180deg); color: #bbb; }
  .editing { display: flex; flex-direction: column; align-items: center; gap: 5px; }
  .editing .caret { width: 6px; }
  .lens { width: 30px; height: 30px; display: grid; place-items: center; background: #fdfdfd; border: 1px solid #c5c5c5; }
  .fold { margin: auto 10px 2px auto; }

  .paper-area { flex: 1; padding: 101px 51px 102px 33px; min-height: 0; }
  .paper { height: 100%; padding: 90px 95px; background: #fff; border: 1px solid #c6c6c6; font: 13px/30px Lato, sans-serif; color: #000; }
  .paper u { text-decoration: underline wavy #e11 1px; text-decoration-skip-ink: none; }
  .paper .blue { text-decoration-color: #22d; }
  .wstatus { height: 22px; display: flex; align-items: center; gap: 20px; padding: 0 8px; background: #f1f1f1; border-top: 1px solid #c0c0c0; color: #555; font-size: 11px; }
  .zoom { margin-left: auto; display: flex; align-items: center; height: 100%; }
  .zoom button { width: 38px; height: 100%; display: grid; place-items: center; }
  .zoom .on { background: #c8c8c8; }
  .zoom b { width: 17px; text-align: center; font-size: 16px; color: #666; }
  .zoom input { width: 100px; height: 12px; background: linear-gradient(#aaa, #aaa) center / 100% 1px no-repeat; }
  .zoom input::-webkit-slider-thumb { appearance: none; width: 4px; height: 11px; background: #666; }
  .pct { margin-left: 10px; }
</style>
